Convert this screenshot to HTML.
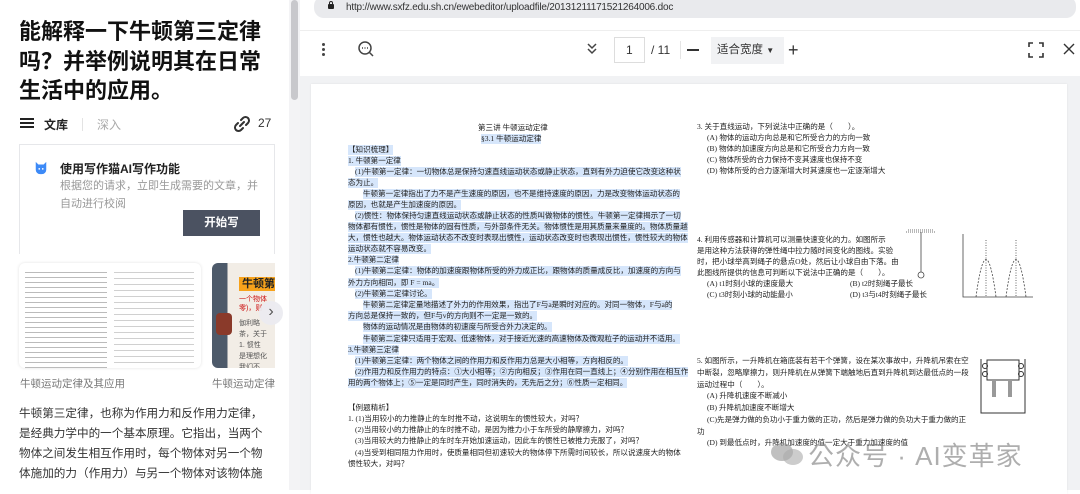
<!DOCTYPE html>
<html><head><meta charset="utf-8"><style>
*{margin:0;padding:0;box-sizing:border-box}
body{width:1080px;height:490px;overflow:hidden;background:#fff;font-family:"Liberation Sans","Noto Sans CJK SC",sans-serif;position:relative}
.a{position:absolute;white-space:nowrap}
.d{position:absolute;white-space:nowrap;font-size:7.55px;line-height:9.5px;color:#222;font-family:"Liberation Serif","Noto Sans CJK SC",sans-serif}
.h{background:#d6e6fb}
</style></head><body>
<div class="a" style="left:19px;top:17px;font-size:22px;font-weight:bold;line-height:29.5px;color:#111">能解释一下牛顿第三定律<br>吗？并举例说明其在日常<br>生活中的应用。</div>
<div class="a" style="left:20px;top:118px;width:14px;height:2px;background:#222;box-shadow:0 4px 0 #222,0 8px 0 #222"></div>
<div class="a" style="left:44px;top:116px;font-size:12px;font-weight:bold;color:#222">文库</div>
<div class="a" style="left:82px;top:118px;width:1px;height:13px;background:#e3e3e3"></div>
<div class="a" style="left:97px;top:116px;font-size:12px;color:#aaa">深入</div>
<svg class="a" style="left:233px;top:115px" width="18" height="18" viewBox="0 0 18 18" fill="none" stroke="#333" stroke-width="2" stroke-linecap="round"><path d="M8 5l2-2a3.5 3.5 0 015 5l-2 2M10 13l-2 2a3.5 3.5 0 01-5-5l2-2M7 11l4-4"/></svg>
<div class="a" style="left:258px;top:116px;font-size:12px;color:#333">27</div>
<div class="a" style="left:19px;top:144px;width:256px;height:110px;border:1px solid #e6e7ea;border-bottom:none"></div>
<svg class="a" style="left:34px;top:161px" width="14" height="14" viewBox="0 0 16 16"><path d="M2 1l3 3h6l3-3v9a5 5 0 01-5 5H7a5 5 0 01-5-5z" fill="#3d8af7"/><circle cx="6" cy="9" r="1" fill="#fff"/><circle cx="10" cy="9" r="1" fill="#fff"/></svg>
<div class="a" style="left:60px;top:160px;font-size:12px;font-weight:bold;color:#222">使用写作猫AI写作功能</div>
<div class="a" style="left:60px;top:177px;font-size:11px;line-height:18px;color:#999">根据您的请求，立即生成需要的文章，并<br>自动进行校阅</div>
<div class="a" style="left:183px;top:210px;width:77px;height:26px;background:#4b5261;color:#fff;font-size:11.5px;font-weight:bold;text-align:center;line-height:26px">开始写</div>
<div class="a" style="left:19px;top:263px;width:182px;height:105px;border-radius:6px;background:#fff;box-shadow:0 0 3px rgba(0,0,0,.12);overflow:hidden">
<div style="position:absolute;left:6px;top:6px;width:82px;height:100px;background:repeating-linear-gradient(#fff 0 3px,#bbb 3px 4px,#fff 4px 5px)"></div>
<div style="position:absolute;left:95px;top:6px;width:80px;height:100px;background:repeating-linear-gradient(#fff 0 3px,#c4c4c4 3px 4px,#fff 4px 6px);opacity:.8"></div></div>
<div class="a" style="left:212px;top:263px;width:63px;height:105px;border-radius:6px 0 0 6px;background:linear-gradient(90deg,#4d5a6a 0 25%,#f2ede6 25%);overflow:hidden">
<div style="position:absolute;left:4px;top:50px;width:16px;height:22px;background:#8a3a2a;border-radius:4px"></div>
<div style="position:absolute;left:27px;top:14px;width:40px;height:14px;background:#f7a21b;font-size:11px;font-weight:bold;color:#222;line-height:14px;padding-left:3px">牛顿第</div>
<div style="position:absolute;left:27px;top:32px;font-size:7px;color:#c11;line-height:9px">一个物体<br>零)，则</div>
<div style="position:absolute;left:27px;top:55px;font-size:7px;color:#555;line-height:11px">伽利略<br>茶，关于<br>1. 惯性<br>是理想化<br>我们不<br><span style="background:#e33;color:#fff">自由粒子</span></div></div>
<div class="a" style="left:259px;top:301px;width:24px;height:24px;border-radius:12px;background:rgba(235,235,240,.95);color:#555;font-size:16px;text-align:center;line-height:22px">›</div>
<div class="a" style="left:20px;top:376px;font-size:10.5px;color:#777">牛顿运动定律及其应用</div>
<div class="a" style="left:212px;top:376px;font-size:10.5px;color:#777;width:63px;overflow:hidden">牛顿运动定律</div>
<div class="a" style="left:19px;top:404px;font-size:11.6px;line-height:20px;color:#333">牛顿第三定律，也称为作用力和反作用力定律，<br>是经典力学中的一个基本原理。它指出，当两个<br>物体之间发生相互作用时，每个物体对另一个物<br>体施加的力（作用力）与另一个物体对该物体施</div>
<div class="a" style="left:289px;top:0;width:11px;height:490px;background:#f3f3f5"></div>
<div class="a" style="left:291px;top:0;width:7px;height:100px;background:#c8c8cc;border-radius:4px"></div>
<div class="a" style="left:300px;top:0;width:780px;height:490px;background:#f1f2f4"></div>
<div class="a" style="left:300px;top:0;width:780px;height:30px;background:#fff"></div>
<div class="a" style="left:314px;top:-4px;width:762px;height:22px;background:#e9eaed;border-radius:10px"></div>
<div class="a" style="left:328px;top:4px;width:6px;height:5px;background:#222;border-radius:1px"></div>
<div class="a" style="left:329px;top:1px;width:4px;height:5px;border:1px solid #222;border-radius:2px 2px 0 0"></div>
<div class="a" style="left:346px;top:2px;font-size:10px;color:#333;letter-spacing:-.2px">http://www.sxfz.edu.sh.cn/ewebeditor/uploadfile/20131211171521264006.doc</div>
<div class="a" style="left:300px;top:30px;width:780px;height:46px;background:#fff;border-top:1px solid #eee"></div>
<div class="a" style="left:322px;top:43px;width:3px;height:3px;background:#444;border-radius:2px;box-shadow:0 5px 0 #444,0 10px 0 #444"></div>
<svg class="a" style="left:357px;top:40px" width="18" height="18" viewBox="0 0 18 18" fill="none" stroke="#444" stroke-width="1.5"><circle cx="8" cy="8" r="6"/><path d="M12.5 12.5L16 16"/><path d="M5 8h6" stroke-dasharray="1 1.5"/></svg>
<svg class="a" style="left:585px;top:42px" width="14" height="14" viewBox="0 0 14 14" fill="none" stroke="#444" stroke-width="1.5"><path d="M3 2l4 4 4-4M3 7l4 4 4-4"/></svg>
<div class="a" style="left:614px;top:37px;width:31px;height:26px;border:1px solid #ddd;font-size:12px;color:#333;line-height:24px;padding-left:11px">1</div>
<div class="a" style="left:651px;top:43px;font-size:12px;color:#333">/ 11</div>
<div class="a" style="left:680px;top:41px;width:1px;height:18px;background:#e5e5e5"></div>
<div class="a" style="left:687px;top:49px;width:12px;height:2px;background:#333"></div>
<div class="a" style="left:711px;top:37px;width:73px;height:27px;background:#f1f2f4;font-size:11.5px;color:#333;line-height:27px;padding-left:6px">适合宽度 <span style="font-size:8px">▼</span></div>
<div class="a" style="left:788px;top:43px;font-size:18px;color:#333;line-height:14px">+</div>
<svg class="a" style="left:1028px;top:42px" width="16" height="16" viewBox="0 0 16 16" fill="none" stroke="#333" stroke-width="1.6"><path d="M1 5V1h4M11 1h4v4M15 11v4h-4M5 15H1v-4"/></svg>
<svg class="a" style="left:1062px;top:42px" width="14" height="14" viewBox="0 0 14 14" stroke="#333" stroke-width="1.4"><path d="M2 2l10 10M12 2L2 12"/></svg>
<div class="a" style="left:311px;top:84px;width:756px;height:410px;background:#fff;box-shadow:0 0 2px rgba(0,0,0,.08)"></div>
<div class="d" style="left:478px;top:123px">第三讲 牛顿运动定律</div>
<div class="d h" style="left:481px;top:134px">§3.1 牛顿运动定律</div>
<div class="d h" style="left:348px;top:145px">【知识梳理】</div>
<div class="d h" style="left:348px;top:156px">1. 牛顿第一定律</div>
<div class="d h" style="left:355px;top:167px">(1)牛顿第一定律：一切物体总是保持匀速直线运动状态或静止状态，直到有外力迫使它改变这种状</div>
<div class="d h" style="left:348px;top:178px">态为止。</div>
<div class="d h" style="left:363px;top:189px">牛顿第一定律指出了力不是产生速度的原因，也不是维持速度的原因，力是改变物体运动状态的</div>
<div class="d h" style="left:348px;top:200px">原因，也就是产生加速度的原因。</div>
<div class="d h" style="left:355px;top:211px">(2)惯性：物体保持匀速直线运动状态或静止状态的性质叫做物体的惯性。牛顿第一定律揭示了一切</div>
<div class="d h" style="left:348px;top:222px">物体都有惯性，惯性是物体的固有性质，与外部条件无关。物体惯性是用其质量来量度的。物体质量越</div>
<div class="d h" style="left:348px;top:233px">大，惯性也越大。物体运动状态不改变时表现出惯性，运动状态改变时也表现出惯性，惯性较大的物体</div>
<div class="d h" style="left:348px;top:244px">运动状态就不容易改变。</div>
<div class="d h" style="left:348px;top:255px">2.牛顿第二定律</div>
<div class="d h" style="left:355px;top:266px">(1)牛顿第二定律：物体的加速度跟物体所受的外力成正比，跟物体的质量成反比，加速度的方向与</div>
<div class="d h" style="left:348px;top:278px">外力方向相同，即 F = ma。</div>
<div class="d h" style="left:355px;top:289px">(2)牛顿第二定律讨论。</div>
<div class="d h" style="left:363px;top:300px">牛顿第二定律定量地描述了外力的作用效果，指出了F与a是瞬时对应的。对同一物体，F与a的</div>
<div class="d h" style="left:348px;top:311px">方向总是保持一致的，但F与v的方向则不一定是一致的。</div>
<div class="d h" style="left:363px;top:322px">物体的运动情况是由物体的初速度与所受合外力决定的。</div>
<div class="d h" style="left:363px;top:334px">牛顿第二定律只适用于宏观、低速物体，对于接近光速的高速物体及微观粒子的运动并不适用。</div>
<div class="d h" style="left:348px;top:345px">3.牛顿第三定律</div>
<div class="d h" style="left:355px;top:356px">(1)牛顿第三定律：两个物体之间的作用力和反作用力总是大小相等，方向相反的。</div>
<div class="d h" style="left:355px;top:367px">(2)作用力和反作用力的特点：①大小相等；②方向相反；③作用在同一直线上；④分别作用在相互作</div>
<div class="d h" style="left:348px;top:378px">用的两个物体上；⑤一定是同时产生，同时消失的，无先后之分；⑥性质一定相同。</div>
<div class="d" style="left:348px;top:403px">【例题精析】</div>
<div class="d" style="left:348px;top:414px">1. (1)当用较小的力推静止的车时推不动，这说明车的惯性较大，对吗？</div>
<div class="d" style="left:355px;top:425px">(2)当用较小的力推静止的车时推不动，是因为推力小于车所受的静摩擦力，对吗？</div>
<div class="d" style="left:355px;top:436px">(3)当用较大的力推静止的车时车开始加速运动，因此车的惯性已被推力克服了，对吗？</div>
<div class="d" style="left:355px;top:448px">(4)当受到相同阻力作用时，使质量相同但初速较大的物体停下所需时间较长，所以说速度大的物体</div>
<div class="d" style="left:348px;top:459px">惯性较大，对吗？</div>
<div class="d" style="left:697px;top:122px">3. 关于直线运动，下列说法中正确的是（　　）。</div>
<div class="d" style="left:707px;top:133px">(A) 物体的运动方向总是和它所受合力的方向一致</div>
<div class="d" style="left:707px;top:144px">(B) 物体的加速度方向总是和它所受合力方向一致</div>
<div class="d" style="left:707px;top:155px">(C) 物体所受的合力保持不变其速度也保持不变</div>
<div class="d" style="left:707px;top:166px">(D) 物体所受的合力逐渐增大时其速度也一定逐渐增大</div>
<div class="d" style="left:697px;top:235px">4. 利用传感器和计算机可以测量快速变化的力。如图所示</div>
<div class="d" style="left:697px;top:246px">是用这种方法获得的弹性绳中拉力随时间变化的图线。实验</div>
<div class="d" style="left:697px;top:257px">时，把小球举高到绳子的悬点O处，然后让小球自由下落。由</div>
<div class="d" style="left:697px;top:268px">此图线所提供的信息可判断以下说法中正确的是（　　）。</div>
<div class="d" style="left:707px;top:279px">(A) t1时刻小球的速度最大</div>
<div class="d" style="left:850px;top:279px">(B) t2时刻绳子最长</div>
<div class="d" style="left:707px;top:290px">(C) t3时刻小球的动能最小</div>
<div class="d" style="left:850px;top:290px">(D) t3与t4时刻绳子最长</div>
<svg class="a" style="left:904px;top:228px" width="130" height="72" viewBox="0 0 130 72" fill="none" stroke="#444" stroke-width="0.8"><path d="M2 4h30M4 2h26" stroke-dasharray="1 1"/><path d="M17 4v40"/><circle cx="17" cy="47" r="3"/><path d="M59 6v63h70"/><path d="M72 69Q82 -6 92 69M102 69Q112 -6 122 69" stroke-dasharray="2 1.5"/><path d="M82 12v57M112 12v57" stroke-dasharray="1 1.5"/></svg>
<div class="d" style="left:697px;top:356px">5. 如图所示，一升降机在箱底装有若干个弹簧，设在某次事故中，升降机吊索在空</div>
<div class="d" style="left:697px;top:368px">中断裂，忽略摩擦力，则升降机在从弹簧下端触地后直到升降机到达最低点的一段</div>
<div class="d" style="left:697px;top:380px">运动过程中（　　）。</div>
<div class="d" style="left:707px;top:391px">(A) 升降机速度不断减小</div>
<div class="d" style="left:707px;top:403px">(B) 升降机加速度不断增大</div>
<div class="d" style="left:707px;top:415px">(C)先是弹力做的负功小于重力做的正功，然后是弹力做的负功大于重力做的正</div>
<div class="d" style="left:697px;top:427px">功</div>
<div class="d" style="left:707px;top:438px">(D) 到最低点时，升降机加速度的值一定大于重力加速度的值</div>
<svg class="a" style="left:980px;top:358px" width="46" height="56" viewBox="0 0 46 56" fill="none" stroke="#333" stroke-width="1"><path d="M1 1v54h44V1"/><rect x="7" y="2" width="32" height="20"/><circle cx="5" cy="8" r="2.5"/><circle cx="5" cy="16" r="2.5"/><circle cx="41" cy="8" r="2.5"/><circle cx="41" cy="16" r="2.5"/><path d="M12 24h4M12 26h4M12 28h4M12 30h4M12 32h4M12 34h4M12 36h4M12 38h4M28 24h4M28 26h4M28 28h4M28 30h4M28 32h4M28 34h4M28 36h4M28 38h4"/></svg>
<svg class="a" style="left:770px;top:440px" width="34" height="28" viewBox="0 0 34 28"><ellipse cx="12" cy="12" rx="11" ry="9" fill="rgba(150,150,150,.6)"/><ellipse cx="23" cy="17" rx="10" ry="8" fill="rgba(170,170,170,.6)"/></svg>
<div class="a" style="left:808px;top:436px;font-size:26px;color:rgba(130,130,130,.65);letter-spacing:1px">公众号 · AI变革家</div>
</body></html>
